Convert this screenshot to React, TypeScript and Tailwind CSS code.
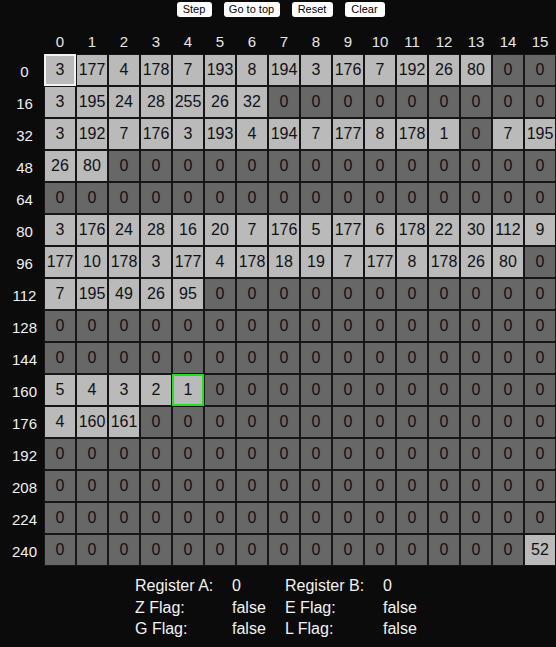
import React from "react";

const rows: number[][] = [
  [3, 177, 4, 178, 7, 193, 8, 194, 3, 176, 7, 192, 26, 80, 0, 0],
  [3, 195, 24, 28, 255, 26, 32, 0, 0, 0, 0, 0, 0, 0, 0, 0],
  [3, 192, 7, 176, 3, 193, 4, 194, 7, 177, 8, 178, 1, 0, 7, 195],
  [26, 80, 0, 0, 0, 0, 0, 0, 0, 0, 0, 0, 0, 0, 0, 0],
  [0, 0, 0, 0, 0, 0, 0, 0, 0, 0, 0, 0, 0, 0, 0, 0],
  [3, 176, 24, 28, 16, 20, 7, 176, 5, 177, 6, 178, 22, 30, 112, 9],
  [177, 10, 178, 3, 177, 4, 178, 18, 19, 7, 177, 8, 178, 26, 80, 0],
  [7, 195, 49, 26, 95, 0, 0, 0, 0, 0, 0, 0, 0, 0, 0, 0],
  [0, 0, 0, 0, 0, 0, 0, 0, 0, 0, 0, 0, 0, 0, 0, 0],
  [0, 0, 0, 0, 0, 0, 0, 0, 0, 0, 0, 0, 0, 0, 0, 0],
  [5, 4, 3, 2, 1, 0, 0, 0, 0, 0, 0, 0, 0, 0, 0, 0],
  [4, 160, 161, 0, 0, 0, 0, 0, 0, 0, 0, 0, 0, 0, 0, 0],
  [0, 0, 0, 0, 0, 0, 0, 0, 0, 0, 0, 0, 0, 0, 0, 0],
  [0, 0, 0, 0, 0, 0, 0, 0, 0, 0, 0, 0, 0, 0, 0, 0],
  [0, 0, 0, 0, 0, 0, 0, 0, 0, 0, 0, 0, 0, 0, 0, 0],
  [0, 0, 0, 0, 0, 0, 0, 0, 0, 0, 0, 0, 0, 0, 0, 52],
];

const cols = Array.from({ length: 16 }, (_, i) => i);

function Cell({ v, addr }: { v: number; addr: number }) {
  const bg = v !== 0 ? "bg-[#bababa]" : "bg-[#676767]";
  let border = "border border-[#161616]";
  if (addr === 0) border = "border-2 border-[#f2f2f2]";
  if (addr === 164) border = "border-2 border-[#22e01f]";
  return (
    <div
      className={`w-8 h-8 box-border flex items-center justify-center text-[16px] text-[#111] ${bg} ${border}`}
    >
      {v}
    </div>
  );
}

function Btn({ label, w }: { label: string; w: string }) {
  return (
    <button
      className={`${w} h-[15px] bg-white text-black text-[11px] leading-[15px] rounded-[3px] flex items-center justify-center`}
    >
      {label}
    </button>
  );
}

export default function App() {
  return (
    <div
      className="w-[556px] min-h-[647px] bg-[#0b0b0b] text-[#eeeeee]"
      style={{ fontFamily: '"Liberation Sans", Arial, sans-serif' }}
    >
      <div className="h-[18px] pt-[2px] flex justify-center pl-[5px] gap-[12px]">
        <Btn label="Step" w="w-[35px]" />
        <Btn label="Go to top" w="w-[56px]" />
        <Btn label="Reset" w="w-[41px]" />
        <Btn label="Clear" w="w-[40px]" />
      </div>
      <div className="mt-[12px] flex h-[24px] items-center">
        <div className="w-[44px]" />
        {cols.map((c) => (
          <div key={c} className="w-8 text-center text-[15px] text-[#e6e6e6]">
            {c}
          </div>
        ))}
      </div>
      <div className="flex flex-col">
        {rows.map((r, ri) => (
          <div key={ri} className="flex h-8">
            <div className="w-[44px] pl-[5px] pt-[4px] flex items-center justify-center text-[15px] text-[#f0f0f0]">
              {ri * 16}
            </div>
            {r.map((v, ci) => (
              <Cell key={ci} v={v} addr={ri * 16 + ci} />
            ))}
          </div>
        ))}
      </div>
      <div className="mt-[9px] pl-[135px] grid grid-cols-[97px_53px_98px_auto] text-[16px] leading-[21.5px] text-[#f2f2f2]">
        <div>Register A:</div>
        <div>0</div>
        <div>Register B:</div>
        <div>0</div>
        <div>Z Flag:</div>
        <div>false</div>
        <div>E Flag:</div>
        <div>false</div>
        <div>G Flag:</div>
        <div>false</div>
        <div>L Flag:</div>
        <div>false</div>
      </div>
    </div>
  );
}
